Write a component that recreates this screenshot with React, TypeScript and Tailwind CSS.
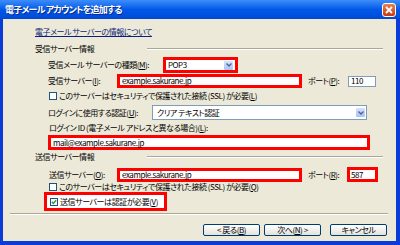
import type { ReactNode } from "react";

const jp =
  "font-['Noto_Sans_CJK_JP',sans-serif] [font-feature-settings:'palt'] text-[8px] leading-[10px] tracking-[-0.45px] whitespace-nowrap text-black";

/** Underlined access-key letter, as in XP dialogs. */
function K({ c }: { c: string }) {
  return <span className="underline">{c}</span>;
}

function Arrow() {
  return (
    <span className="flex h-[9px] w-[9px] items-center justify-center rounded-[1px] bg-gradient-to-b from-[#D6E3FD] to-[#A9C1F7]">
      <svg width="6" height="4" viewBox="0 0 6 4">
        <path d="M0.5 0.5 L3 3 L5.5 0.5" fill="none" stroke="#4D6185" strokeWidth="1.3" />
      </svg>
    </span>
  );
}

function Check({ on }: { on?: boolean }) {
  return (
    <span className="flex h-[8px] w-[8px] shrink-0 items-center justify-center border border-[#1C5180] bg-white">
      {on && (
        <svg width="6" height="6" viewBox="0 0 6 6">
          <path d="M0.8 2.8 L2.3 4.4 L5.2 1.2" fill="none" stroke="#21A121" strokeWidth="1.4" />
        </svg>
      )}
    </span>
  );
}

function RedBox({ className, children }: { className: string; children?: ReactNode }) {
  return (
    <div className={`flex shrink-0 items-center border-[3px] border-[#FF0000] bg-white ${className}`}>{children}</div>
  );
}

function Heading({ text }: { text: string }) {
  return (
    <div className="ml-[32px] flex h-[10px] items-center">
      <span className="w-[112px]">{text}</span>
      <div className="w-[236px] border-t border-b border-t-[#ACA899] border-b-white" />
    </div>
  );
}

function Button({ children, className }: { children: ReactNode; className: string }) {
  return (
    <div
      className={`flex h-[12px] w-[57px] items-center justify-center rounded-[2px] border border-[#003C74] bg-gradient-to-b from-white to-[#E3E2DA] ${className}`}
    >
      {children}
    </div>
  );
}

export default function App() {
  return (
    <div className={`flex h-[245px] w-[400px] flex-col overflow-hidden bg-[#0A3DD8] ${jp}`}>
      <div className="flex h-[19px] items-center bg-gradient-to-b from-[#3C8DFA] via-[#0058E8] to-[#0049D6] pl-[5px] pr-[4px]">
        <span className="flex-1 text-[9px] font-bold tracking-[-0.8px] text-white [text-shadow:1px_1px_0_#0A2A8A]">
          電子メール アカウントを追加する
        </span>
        <div className="flex h-[14px] w-[14px] items-center justify-center rounded-[3px] border border-white bg-gradient-to-b from-[#E9804F] to-[#C6360E]">
          <svg width="8" height="8" viewBox="0 0 8 8">
            <path d="M1 1 L7 7 M7 1 L1 7" stroke="white" strokeWidth="1.8" />
          </svg>
        </div>
      </div>

      <div className="ml-[3px] mr-[4px] mb-[4px] flex flex-1 flex-col bg-[#ECE9D8]">
        <div className="ml-[32px] mt-[8px] h-[10px] text-[#0B1E78] underline">電子メール サーバーの情報について</div>

        <div className="mt-[7px]">
          <Heading text="受信サーバー情報" />
        </div>

        <div className="ml-[45px] mt-[3px] flex h-[16px] items-center">
          <span className="w-[115px]">
            受信メール サーバーの種類(<K c="M" />):
          </span>
          <RedBox className="h-[16px] w-[75px] justify-between pl-[2px] pr-[2px]">
            <span>POP3</span>
            <Arrow />
          </RedBox>
        </div>

        <div className="ml-[45px] mt-[1px] flex h-[14px] items-center">
          <span className="w-[69px]">
            受信サーバー(<K c="I" />):
          </span>
          <RedBox className="h-[14px] w-[185px] pl-[2px]">example.sakurane.jp</RedBox>
          <span className="ml-[6px] w-[40px]">
            ポート(<K c="P" />):
          </span>
          <div className="flex h-[11px] w-[28px] items-center border border-[#7F9DB9] bg-white pl-[2px]">110</div>
        </div>

        <div className="ml-[46px] mt-[3px] flex h-[10px] items-center gap-[2px]">
          <Check />
          <span>
            このサーバーはセキュリティで保護された接続 (SSL) が必要(<K c="L" />)
          </span>
        </div>

        <div className="ml-[45px] mt-[4px] flex h-[15px] items-center">
          <span className="w-[104px]">
            ログインに使用する認証(<K c="U" />):
          </span>
          <div className="flex h-[15px] w-[215px] items-center justify-between border border-[#7F9DB9] bg-white pl-[4px] pr-[1px]">
            <span>クリア テキスト認証</span>
            <Arrow />
          </div>
        </div>

        <div className="ml-[46px] mt-[3px] h-[10px]">
          ログイン ID (電子メール アドレスと異なる場合)(<K c="L" />):
        </div>

        <div className="ml-[45px] mt-[2px] flex">
          <RedBox className="h-[15px] w-[322px] pl-[2px]">mail@example.sakurane.jp</RedBox>
        </div>

        <div className="mt-[2px]">
          <Heading text="送信サーバー情報" />
        </div>

        <div className="ml-[46px] mt-[5px] flex h-[15px] items-center">
          <span className="w-[68px]">
            送信サーバー(<K c="O" />):
          </span>
          <RedBox className="h-[14px] w-[185px] pl-[2px]">example.sakurane.jp</RedBox>
          <span className="ml-[6px] w-[39px]">
            ポート(<K c="R" />):
          </span>
          <RedBox className="h-[15px] w-[31px] pl-[1px]">587</RedBox>
        </div>

        <div className="ml-[46px] mt-0 flex h-[9px] items-center gap-[2px]">
          <Check />
          <span>
            このサーバーはセキュリティで保護された接続 (SSL) が必要(<K c="Q" />)
          </span>
        </div>

        <div className="ml-[41px] mt-[1px] flex">
          <RedBox className="h-[19px] w-[123px] gap-[2px] pl-[3px]">
            <Check on />
            <span>
              送信サーバーは認証が必要(<K c="V" />)
            </span>
          </RedBox>
        </div>

        <div className="ml-[7px] mt-[2px] w-[378px] border-t border-b border-t-[#ACA899] border-b-white" />

        <div className="ml-[200px] mt-[9px] flex">
          <Button className="">
            &lt; 戻る(<K c="B" />)
          </Button>
          <Button className="ml-[4px]">
            次へ(<K c="N" />) &gt;
          </Button>
          <Button className="ml-[9px]">キャンセル</Button>
        </div>
      </div>
    </div>
  );
}
